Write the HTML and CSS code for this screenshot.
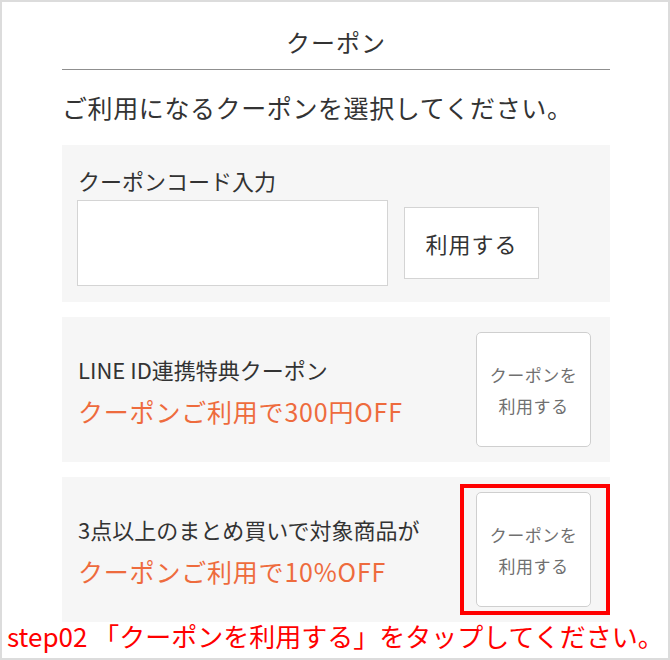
FILE: index.html
```html
<!DOCTYPE html>
<html lang="ja">
<head>
<meta charset="utf-8">
<title>クーポン</title>
<link rel="stylesheet" href="styles.css">
</head>
<body>
<div class="frame">
  <div class="column">
    <h1 class="title">クーポン</h1>
    <p class="lead">ご利用になるクーポンを選択してください。</p>

    <section class="panel code-panel">
      <div class="code-label">クーポンコード入力</div>
      <div class="code-row">
        <input class="code-input" type="text" aria-label="クーポンコード">
        <button class="apply-btn" type="button">利用する</button>
      </div>
    </section>

    <section class="panel coupon">
      <div class="coupon-text">
        <div class="coupon-name">LINE ID連携特典クーポン</div>
        <div class="coupon-benefit">クーポンご利用で300円OFF</div>
      </div>
      <button class="use-btn" type="button">クーポンを<br>利用する</button>
    </section>

    <section class="panel coupon highlighted">
      <div class="coupon-text">
        <div class="coupon-name">3点以上のまとめ買いで対象商品が</div>
        <div class="coupon-benefit">クーポンご利用で10%OFF</div>
      </div>
      <button class="use-btn" type="button">クーポンを<br>利用する</button>
      <span class="marker"></span>
    </section>
  </div>
  <p class="step">step02 「クーポンを利用する」をタップしてください。</p>
</div>
</body>
</html>
```

FILE: styles.css
```css
* {
  box-sizing: border-box;
}

html, body {
  margin: 0;
  padding: 0;
  background: #fff;
}

body {
  font-family: "Noto Sans CJK JP", "Noto Sans", sans-serif;
  color: #333;
}

.frame {
  width: 670px;
  height: 660px;
  border: 2px solid #dcdcdc;
  overflow: hidden;
  background: #fff;
}

.column {
  margin: 0 58px 0 60px;
}

.title {
  margin: 0;
  padding: 20px 0 7px;
  border-bottom: 1px solid #8f8f8f;
  font-size: 24px;
  font-weight: normal;
  line-height: 40px;
  letter-spacing: 1px;
  text-align: center;
  color: #333;
}

.lead {
  margin: 19px 0 20px;
  font-size: 25px;
  line-height: 36px;
  letter-spacing: 0.6px;
  color: #333;
}

.panel {
  background: #f6f6f6;
}

.code-panel {
  padding: 20px 15px 16px;
}

.code-label {
  font-size: 22px;
  line-height: 30px;
  padding-left: 1px;
}

.code-row {
  display: flex;
  align-items: center;
  margin-top: 5px;
}

.code-input {
  width: 311px;
  height: 86px;
  margin: 0;
  border: 1px solid #d4d4d4;
  background: #fff;
  padding: 0 10px;
  font: inherit;
  outline: none;
}

.apply-btn {
  width: 135px;
  height: 72px;
  margin-left: 16px;
  border: 1px solid #d4d4d4;
  background: #fff;
  font-family: inherit;
  font-size: 22px;
  letter-spacing: 1px;
  color: #333;
  padding: 0;
}

.coupon {
  display: flex;
  align-items: center;
  margin-top: 15px;
  padding: 15px 19px 15px 16px;
}

.highlighted {
  position: relative;
}

.coupon-text {
  flex: 1;
}

.coupon-name {
  font-size: 22px;
  line-height: 42px;
  color: #333;
}

.coupon-benefit {
  font-size: 25px;
  line-height: 42px;
  letter-spacing: 0.8px;
  color: #ee6b3d;
}

.use-btn {
  width: 115px;
  height: 115px;
  border: 1px solid #cfcfcf;
  border-radius: 5px;
  background: #fff;
  font-family: inherit;
  font-size: 17px;
  line-height: 31px;
  letter-spacing: 0.5px;
  color: #707070;
  padding: 0;
}

.marker {
  position: absolute;
  left: 398px;
  top: 7px;
  width: 150px;
  height: 131px;
  border: 4px solid #ff0000;
  pointer-events: none;
}

.step {
  margin: 0;
  padding-left: 5px;
  font-size: 26px;
  line-height: 27px;
  color: #ff0000;
  white-space: nowrap;
}
```
